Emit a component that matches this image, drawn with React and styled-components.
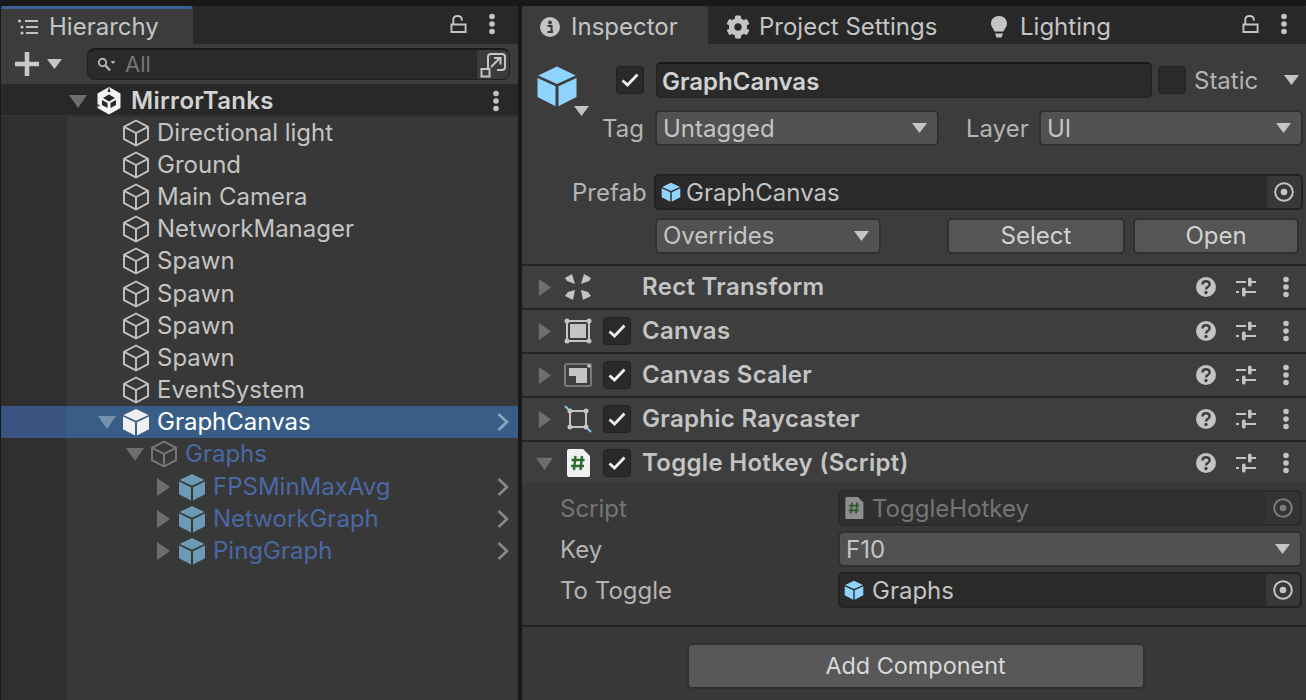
import React from "react";
import styled, {createGlobalStyle} from "styled-components";
import {FaCog} from "react-icons/fa";

const Global = createGlobalStyle`
  html, body {
    margin: 0;
    padding: 0;
    height: 700px;
    overflow: hidden;
    background: #191919;
    font-family: Inter, "Liberation Sans", sans-serif;
    color: #c4c4c4;
  }
  * { box-sizing: border-box; }
  svg { display: block; flex-shrink: 0; }
`;

const Page = styled.div`
  display: flex;
  width: 1306px;
  height: 700px;
  padding-top: 6px;
  background: #191919;
  font-size: 24px;
  line-height: 32px;
`;

const Panel = styled.section`
  display: flex;
  flex-direction: column;
  width: ${(p) => p.$width}px;
  margin-left: ${(p) => p.$left}px;
  background: #383838;
  overflow: hidden;
`;

const TabBar = styled.div`
  display: flex;
  align-items: stretch;
  height: 38px;
  background: #282828;
  border-radius: 3px 3px 0 0;
  flex-shrink: 0;
`;

const Tab = styled.div`
  display: flex;
  align-items: center;
  gap: ${(p) => p.$gap || 10}px;
  width: ${(p) => p.$width}px;
  padding-left: ${(p) => p.$pad}px;
  background: ${(p) => (p.$active ? "#3c3c3c" : "transparent")};
  border-top: 3px solid ${(p) => (p.$accent ? "#3a6398" : "transparent")};
  border-radius: 3px 3px 0 0;
`;

const TabTools = styled.div`
  display: flex;
  align-items: center;
  gap: 21px;
  margin-left: auto;
  padding-right: ${(p) => p.$right}px;
  padding-bottom: 3px;
`;

const Toolbar = styled.div`
  display: flex;
  align-items: center;
  height: 40px;
  padding: 0 8px 0 14px;
  background: #3c3c3c;
  flex-shrink: 0;
`;

const PlusMenu = styled.div`
  display: flex;
  align-items: center;
  gap: 8px;
  width: 72px;
`;

const Search = styled.div`
  display: flex;
  align-items: center;
  flex: 1;
  height: 32px;
  background: #2a2a2a;
  border: 1px solid #212121;
  border-top: 2px solid #191919;
  border-radius: 8px;
  overflow: hidden;
`;

const SearchHint = styled.span`
  flex: 1;
  margin-left: 9px;
  padding-bottom: 2px;
  color: #757575;
  font-size: 22px;
`;

const SearchIcon = styled.span`
  margin-left: 9px;
`;

const SearchButton = styled.span`
  display: flex;
  align-items: center;
  justify-content: center;
  width: 34px;
  height: 100%;
  background: #3c3c3c;
  border-left: 2px solid #2a2a2a;
`;

const SceneHeader = styled.div`
  display: flex;
  align-items: center;
  height: 32.5px;
  padding: 4px 18px 0 68px;
  background: #282828;
  border-bottom: 2px solid #333333;
  flex-shrink: 0;
  font-weight: 600;
  letter-spacing: 0.3px;
  color: #d2d2d2;
`;

const SceneName = styled.span`
  margin-left: 9px;
`;

const SceneLogo = styled.span`
  margin-left: 9px;
`;

const Tree = styled.div`
  flex: 1;
  background: linear-gradient(to right, #2f2f2f 65px, #383838 65px);
`;

const Row = styled.div`
  display: flex;
  align-items: center;
  height: 32.2px;
  padding-left: ${(p) => 96 + p.$depth * 28}px;
  padding-right: 8px;
  color: ${(p) => (p.$selected ? "#ffffff" : p.$dim ? "#4a68a3" : "#c4c4c4")};
  background: ${(p) =>
    p.$selected ? "linear-gradient(to right, #3a5380 65px, #385d87 65px)" : "transparent"};
`;

const ArrowSlot = styled.span`
  display: flex;
  justify-content: center;
  width: 20px;
`;

const RowIcon = styled.span`
  margin: 0 7px 0 5px;
`;

const RowEnd = styled.span`
  margin-left: auto;
`;

const HeaderSection = styled.div`
  display: flex;
  flex-direction: column;
  height: 222px;
  padding-top: 18px;
  background: #3c3c3c;
  border-bottom: 2px solid #232323;
  flex-shrink: 0;
`;

const FormRow = styled.div`
  display: flex;
  align-items: center;
  height: 36px;
  margin-top: ${(p) => p.$top || 0}px;
  padding-left: ${(p) => p.$left || 0}px;
`;

const Label = styled.span`
  color: #b4b4b4;
  padding-top: 1px;
  margin-left: ${(p) => p.$left || 0}px;
  width: ${(p) => (p.$width ? `${p.$width}px` : "auto")};
`;

const BigCube = styled.div`
  position: relative;
  margin-left: 14px;
  margin-top: 12px;
  width: 80px;
`;

const Caret = styled.span`
  position: absolute;
  left: 38px;
  top: 41px;
`;

const StaticCaret = styled.span`
  margin-left: 26px;
`;

const Check = styled.span`
  display: flex;
  align-items: center;
  justify-content: center;
  width: 28px;
  height: 28px;
  background: #2a2a2a;
  border: 1px solid #212121;
  border-radius: 4px;
  flex-shrink: 0;
  margin-left: ${(p) => p.$left || 0}px;
`;

const NameField = styled.div`
  display: flex;
  align-items: center;
  width: 496px;
  height: 36px;
  margin-left: 12px;
  padding: 2px 0 0 5px;
  background: #2a2a2a;
  border: 1px solid #212121;
  border-top: 2px solid #191919;
  border-radius: 5px;
  font-weight: 600;
  color: #d2d2d2;
`;

const Dropdown = styled.div`
  display: flex;
  align-items: center;
  justify-content: space-between;
  width: ${(p) => p.$width}px;
  height: 36px;
  margin-left: ${(p) => p.$left || 0}px;
  padding: 0 10px 0 6px;
  background: #515151;
  border: 2px solid #303030;
  border-radius: 5px;
  flex-shrink: 0;
`;

const DropdownText = styled.span`
  padding-top: ${(p) => p.$nudge || 0}px;
`;

const Button = styled.div`
  display: flex;
  align-items: center;
  justify-content: center;
  width: ${(p) => p.$width}px;
  height: 36px;
  margin-left: ${(p) => p.$left}px;
  background: #555555;
  border: 2px solid #303030;
  border-radius: 5px;
  color: #d2d2d2;
`;

const ObjectField = styled.div`
  display: flex;
  align-items: center;
  width: ${(p) => p.$width}px;
  height: 36px;
  margin-left: ${(p) => p.$left || 0}px;
  padding-left: ${(p) => p.$pad}px;
  background: ${(p) => (p.$dim ? "#303030" : "#2a2a2a")};
  border: 2px solid ${(p) => (p.$dim ? "#2a2a2a" : "#222222")};
  border-radius: 5px;
  overflow: hidden;
  color: ${(p) => (p.$dim ? "#757575" : "#c4c4c4")};
  flex-shrink: 0;
`;

const FieldIcon = styled.span`
  margin-right: ${(p) => p.$gap}px;
`;

const FieldText = styled.span`
  padding-top: 2px;
`;

const Picker = styled.span`
  display: flex;
  align-items: center;
  justify-content: center;
  width: 34px;
  height: 100%;
  margin-left: auto;
  background: ${(p) => (p.$dim ? "#343434" : "#383838")};
`;

const Component = styled.div`
  display: flex;
  align-items: center;
  height: ${(p) => (p.$open ? 40 : 44)}px;
  padding-right: 16px;
  padding-top: ${(p) => (p.$open ? 2 : 0)}px;
  background: #3e3e3e;
  border-bottom: ${(p) => (p.$open ? "none" : "2px solid #232323")};
  flex-shrink: 0;
  font-weight: 600;
  letter-spacing: 0.3px;
  color: #c4c4c4;
`;

const CompArrow = styled.span`
  display: flex;
  justify-content: center;
  width: 22px;
  margin-left: 11px;
`;

const CompIcon = styled.span`
  display: flex;
  justify-content: center;
  width: 30px;
  margin-left: 8px;
`;

const CompSlot = styled.span`
  width: 28px;
  margin-left: 10px;
`;

const CompTitle = styled.span`
  margin-left: 11px;
`;

const CompTools = styled.span`
  display: flex;
  align-items: center;
  margin-left: auto;
  gap: 20px;
`;

const CompDots = styled.span`
  margin-left: 6px;
`;

const Fields = styled.div`
  display: flex;
  flex-direction: column;
  gap: 5px;
  height: 145px;
  padding: 8px 4px 0 38px;
  border-bottom: 2px solid #232323;
  flex-shrink: 0;
`;

const FieldRow = styled.div`
  display: flex;
  align-items: center;
  height: 36px;
`;

const FieldLabel = styled.span`
  width: 278px;
  padding-top: 2px;
  color: ${(p) => (p.$dim ? "#757575" : "#b4b4b4")};
`;

const Footer = styled.div`
  display: flex;
  justify-content: center;
  padding: 16px 0 0 3px;
`;

const AddButton = styled.div`
  display: flex;
  align-items: center;
  justify-content: center;
  width: 458px;
  height: 46px;
  background: #585858;
  border: 2px solid #303030;
  border-radius: 5px;
  font-size: 23.4px;
  color: #d8d8d8;
`;

const Tri = ({dir = "down", color = "#6e6e6e", size = 18}) => (
  <svg width={size} height={size} viewBox="0 0 18 18">
    <polygon
      points={dir === "down" ? "0,3 18,3 9,16" : "3,0 16,9 3,18"}
      fill={color}
    />
  </svg>
);

const MiniTri = ({color = "#c4c4c4", w = 15, h = 10}) => (
  <svg width={w} height={h} viewBox="0 0 15 10">
    <polygon points="0,0 15,0 7.5,10" fill={color}/>
  </svg>
);

const Chevron = ({color = "#8a8a8a"}) => (
  <svg width="14" height="20" viewBox="0 0 14 20">
    <path d="M2.5 2 L11 10 L2.5 18" fill="none" stroke={color} strokeWidth="2.6"/>
  </svg>
);

const CubeLine = ({color = "#c4c4c4", size = 28}) => (
  <svg width={size} height={size} viewBox="0 0 28 28">
    <path
      d="M14 1.5 L26 7.8 V20.2 L14 26.5 L2 20.2 V7.8 Z M2 7.8 L14 14 L26 7.8 M14 14 V26.5"
      fill="none"
      stroke={color}
      strokeWidth="1.9"
      strokeLinejoin="round"
    />
  </svg>
);

const CubeFill = ({color = "#8fd3ff", size = 28}) => (
  <svg width={size} height={size} viewBox="0 0 28 28">
    <polygon points="14,1 26.5,7 14,12.7 1.5,7" fill={color}/>
    <polygon points="1,8.6 13,14.2 13,27.5 1,21.3" fill={color}/>
    <polygon points="27,8.6 15,14.2 15,27.5 27,21.3" fill={color}/>
  </svg>
);

const UnityLogo = () => (
  <svg width="26" height="28" viewBox="0 0 26 28">
    <polygon points="13,0 24.5,6.5 24.5,21 13,27.5 1.5,21 1.5,6.5" fill="#f2f2f2"/>
    <polygon points="13,7.5 19,11 13,14.5 7,11" fill="#282828"/>
    <polygon points="6,13 11.5,16 11.5,21 6,18" fill="#282828"/>
    <polygon points="20,13 14.5,16 14.5,21 20,18" fill="#282828"/>
    <polygon points="13,0 14.5,5 11.5,5" fill="#282828"/>
    <polygon points="1.5,17 4,18.5 1.5,20" fill="#282828"/>
  </svg>
);

const Lock = () => (
  <svg width="17" height="20" viewBox="0 0 18 20">
    <path d="M1.5 10.5 H16.5 V18.5 H1.5 Z M3.5 10 V5.5 Q3.5 1.5 8 1.5 Q12.5 1.5 12.5 5.5 V6.5"
      fill="none" stroke="#c4c4c4" strokeWidth="2"/>
  </svg>
);

const Dots = ({color = "#c4c4c4"}) => (
  <svg width="8" height="22" viewBox="0 0 8 22">
    <circle cx="4" cy="3.5" r="2.8" fill={color}/>
    <circle cx="4" cy="11" r="2.8" fill={color}/>
    <circle cx="4" cy="18.5" r="2.8" fill={color}/>
  </svg>
);

const ListIcon = () => (
  <svg width="22" height="18" viewBox="0 0 22 18">
    <circle cx="2.5" cy="3" r="1.6" fill="#c4c4c4"/>
    <circle cx="5" cy="9" r="1.6" fill="#c4c4c4"/>
    <circle cx="5" cy="15" r="1.6" fill="#c4c4c4"/>
    <path d="M8 3 H21 M9 9 H21 M9 15 H21" stroke="#c4c4c4" strokeWidth="2"/>
  </svg>
);

const Plus = () => (
  <svg width="24" height="24" viewBox="0 0 24 24">
    <path d="M12 0 V24 M0 12 H24" stroke="#c8c8c8" strokeWidth="4.6"/>
  </svg>
);

const SearchGlass = () => (
  <svg width="19" height="16" viewBox="0 0 19 16">
    <circle cx="5.5" cy="5.5" r="3.7" fill="none" stroke="#b4b4b4" strokeWidth="2"/>
    <path d="M8.5 8.5 L13 13.5" stroke="#b4b4b4" strokeWidth="2.4"/>
    <polygon points="13.5,4 18.5,4 16,7" fill="#b4b4b4"/>
  </svg>
);

const SearchWindow = () => (
  <svg width="26" height="26" viewBox="0 0 26 26">
    <path d="M8 17 V5 Q8 2 11 2 H22 Q25 2 25 5 V15 Q25 18 22 18 H17" fill="none" stroke="#c4c4c4" strokeWidth="2"/>
    <rect x="1.5" y="17" width="8" height="7.5" fill="none" stroke="#c4c4c4" strokeWidth="2"/>
    <path d="M11 15 L20 6 M14 6 H20.5 V12.5" fill="none" stroke="#c4c4c4" strokeWidth="2"/>
  </svg>
);

const Info = () => (
  <svg width="20" height="20" viewBox="0 0 20 20">
    <circle cx="10" cy="10" r="10" fill="#c4c4c4"/>
    <circle cx="10" cy="5.5" r="1.9" fill="#3c3c3c"/>
    <path d="M7.5 9 H11.5 V14.5 H13 M7.5 15 H13" fill="none" stroke="#3c3c3c" strokeWidth="2.2"/>
  </svg>
);

const Bulb = () => (
  <svg width="18" height="24" viewBox="0 0 18 24">
    <path d="M9 1 C14 1 17 4.5 17 8.5 C17 12 14.5 13.5 13.5 16.5 H4.5 C3.5 13.5 1 12 1 8.5 C1 4.5 4 1 9 1 Z" fill="#c4c4c4"/>
    <path d="M5 18.5 H13 L11.5 22.5 H6.5 Z" fill="#c4c4c4"/>
  </svg>
);

const CheckMark = () => (
  <svg width="18" height="14" viewBox="0 0 18 14">
    <path d="M1.5 7.5 L6.5 12 L16.5 1.5" fill="none" stroke="#f0f0f0" strokeWidth="2.8"/>
  </svg>
);

const Target = ({color = "#c4c4c4"}) => (
  <svg width="20" height="20" viewBox="0 0 20 20">
    <circle cx="10" cy="10" r="8.8" fill="none" stroke={color} strokeWidth="2"/>
    <circle cx="10" cy="10" r="3.3" fill={color}/>
  </svg>
);

const Help = () => (
  <svg width="20" height="20" viewBox="0 0 20 20">
    <circle cx="10" cy="10" r="10" fill="#c4c4c4"/>
    <path d="M6.5 7.5 Q6.5 4.3 10 4.3 Q13.6 4.3 13.6 7.2 Q13.6 9 11.8 9.8 Q10 10.6 10 12.5" fill="none" stroke="#3e3e3e" strokeWidth="2.4"/>
    <circle cx="10" cy="15.5" r="1.7" fill="#3e3e3e"/>
  </svg>
);

const Sliders = () => (
  <svg width="20" height="20" viewBox="0 0 20 20">
    <path d="M0 5 H10 M14 5 H20 M0 15 H3 M8 15 H20" stroke="#c4c4c4" strokeWidth="2"/>
    <rect x="12" y="0.5" width="3.6" height="9" rx="1.6" fill="#c4c4c4"/>
    <rect x="6" y="10.5" width="3.6" height="9" rx="1.6" fill="#c4c4c4"/>
  </svg>
);

const RectIcon = () => (
  <svg width="26" height="26" viewBox="0 0 26 26">
    <g fill="#c4c4c4">
      <polygon points="0,4 7,0 10,10 2,7"/>
      <polygon points="26,4 19,0 16,10 24,7"/>
      <polygon points="0,22 8,26 10,16 3,18"/>
      <polygon points="26,22 18,26 16,16 23,18"/>
    </g>
  </svg>
);

const CanvasIcon = () => (
  <svg width="28" height="26" viewBox="0 0 28 26">
    <rect x="3" y="3" width="22" height="20" fill="none" stroke="#c4c4c4" strokeWidth="2"/>
    <rect x="6" y="6" width="16" height="14" fill="#c4c4c4"/>
    <g fill="#c4c4c4">
      <circle cx="3" cy="3" r="2.5"/><circle cx="25" cy="3" r="2.5"/>
      <circle cx="3" cy="23" r="2.5"/><circle cx="25" cy="23" r="2.5"/>
    </g>
  </svg>
);

const ScalerIcon = () => (
  <svg width="28" height="24" viewBox="0 0 28 24">
    <rect x="1" y="1" width="26" height="22" rx="1.5" fill="none" stroke="#8a8a8a" strokeWidth="1.6"/>
    <polygon points="5,5 23,5 23,20 12,20 12,13 5,13" fill="#c4c4c4"/>
    <circle cx="25" cy="3" r="1.8" fill="#c4c4c4"/>
  </svg>
);

const RaycastIcon = () => (
  <svg width="28" height="28" viewBox="0 0 28 28">
    <path d="M1 1 L5 5 M23 23 L27 27" stroke="#7cc8f5" strokeWidth="2"/>
    <rect x="6" y="6" width="16" height="16" fill="none" stroke="#c4c4c4" strokeWidth="2"/>
    <g fill="#c4c4c4">
      <circle cx="6" cy="6" r="2.5"/><circle cx="22" cy="6" r="2.5"/>
      <circle cx="6" cy="22" r="2.5"/><circle cx="22" cy="22" r="2.5"/>
    </g>
  </svg>
);

const ScriptIcon = ({w = 24, h = 28, dim}) => (
  <svg width={w} height={h} viewBox="0 0 24 28">
    <path d="M1 2 Q1 0 3 0 H17 L24 7 V26 Q24 28 22 28 H3 Q1 28 1 26 Z" fill={dim ? "#8e8e8e" : "#f0f0f0"}/>
    <path d="M9.5 7 L8 21 M16 7 L14.5 21 M5.5 11 H18.5 M5 17 H18"
      fill="none" stroke={dim ? "#2f5a2f" : "#2d6a2d"} strokeWidth="2.4"/>
  </svg>
);

const sceneItems = [
  {name: "Directional light", depth: 0},
  {name: "Ground", depth: 0},
  {name: "Main Camera", depth: 0},
  {name: "NetworkManager", depth: 0},
  {name: "Spawn", depth: 0},
  {name: "Spawn", depth: 0},
  {name: "Spawn", depth: 0},
  {name: "Spawn", depth: 0},
  {name: "EventSystem", depth: 0},
  {name: "GraphCanvas", depth: 0, selected: true, arrow: "down", end: true},
  {name: "Graphs", depth: 1, dim: true, arrow: "down"},
  {name: "FPSMinMaxAvg", depth: 2, dim: true, arrow: "right", prefab: true, end: true},
  {name: "NetworkGraph", depth: 2, dim: true, arrow: "right", prefab: true, end: true},
  {name: "PingGraph", depth: 2, dim: true, arrow: "right", prefab: true, end: true},
];

const components = [
  {title: "Rect Transform", icon: <RectIcon/>},
  {title: "Canvas", icon: <CanvasIcon/>, check: true},
  {title: "Canvas Scaler", icon: <ScalerIcon/>, check: true},
  {title: "Graphic Raycaster", icon: <RaycastIcon/>, check: true},
  {title: "Toggle Hotkey (Script)", icon: <ScriptIcon/>, check: true, open: true},
];

const itemIcon = (item) => {
  if (item.selected) return <CubeFill color="#f0f0f0"/>;
  if (item.prefab) return <CubeFill color="#6a9ab5"/>;
  if (item.dim) return <CubeLine color="#7a7a7a"/>;
  return <CubeLine/>;
};

const App = () => (
  <Page>
    <Global/>
    <Panel $width={517} $left={1}>
      <TabBar>
        <Tab $active $accent $width={192} $pad={16} $gap={10}>
          <ListIcon/>
          Hierarchy
        </Tab>
        <TabTools $right={22}>
          <Lock/>
          <Dots/>
        </TabTools>
      </TabBar>
      <Toolbar>
        <PlusMenu>
          <Plus/>
          <MiniTri/>
        </PlusMenu>
        <Search>
          <SearchIcon><SearchGlass/></SearchIcon>
          <SearchHint>All</SearchHint>
          <SearchButton><SearchWindow/></SearchButton>
        </Search>
      </Toolbar>
      <SceneHeader>
        <Tri/>
        <SceneLogo><UnityLogo/></SceneLogo>
        <SceneName>MirrorTanks</SceneName>
        <RowEnd><Dots/></RowEnd>
      </SceneHeader>
      <Tree>
        {sceneItems.map((item, ind) => (
          <Row key={ind} $depth={item.depth} $selected={item.selected} $dim={item.dim}>
            <ArrowSlot>
              {item.arrow && <Tri dir={item.arrow} color={item.selected ? "#7492ad" : "#6e6e6e"}/>}
            </ArrowSlot>
            <RowIcon>{itemIcon(item)}</RowIcon>
            {item.name}
            {item.end && <RowEnd><Chevron color={item.selected ? "#8ba6c0" : "#8a8a8a"}/></RowEnd>}
          </Row>
        ))}
      </Tree>
    </Panel>

    <Panel $width={784} $left={4}>
      <TabBar>
        <Tab $active $width={186} $pad={18} $gap={11}>
          <Info/>
          Inspector
        </Tab>
        <Tab $width={256} $pad={18} $gap={9}>
          <FaCog size={24}/>
          Project Settings
        </Tab>
        <Tab $width={180} $pad={26} $gap={12}>
          <Bulb/>
          Lighting
        </Tab>
        <TabTools $right={18}>
          <Lock/>
          <Dots/>
        </TabTools>
      </TabBar>
      <HeaderSection>
        <FormRow>
          <BigCube>
            <CubeFill size={42}/>
            <Caret><MiniTri/></Caret>
          </BigCube>
          <Check><CheckMark/></Check>
          <NameField>GraphCanvas</NameField>
          <Check $left={6}/>
          <Label $left={8}>Static</Label>
          <StaticCaret><MiniTri/></StaticCaret>
        </FormRow>
        <FormRow $top={12} $left={80}>
          <Label $width={53}>Tag</Label>
          <Dropdown $width={284}><DropdownText $nudge={1}>Untagged</DropdownText><MiniTri/></Dropdown>
          <Label $left={27} $width={73}>Layer</Label>
          <Dropdown $width={264}><DropdownText $nudge={1}>UI</DropdownText><MiniTri/></Dropdown>
        </FormRow>
        <FormRow $top={28} $left={50}>
          <Label $width={82}>Prefab</Label>
          <ObjectField $width={649} $pad={5}>
            <FieldIcon $gap={5}><CubeFill size={20}/></FieldIcon>
            <FieldText>GraphCanvas</FieldText>
            <Picker><Target/></Picker>
          </ObjectField>
        </FormRow>
        <FormRow $top={8} $left={133}>
          <Dropdown $width={226}><DropdownText>Overrides</DropdownText><MiniTri/></Dropdown>
          <Button $width={178} $left={66}>Select</Button>
          <Button $width={166} $left={8}>Open</Button>
        </FormRow>
      </HeaderSection>
      {components.map((comp) => (
        <Component key={comp.title} $open={comp.open}>
          <CompArrow>
            <Tri dir={comp.open ? "down" : "right"} size={17}/>
          </CompArrow>
          <CompIcon>{comp.icon}</CompIcon>
          <CompSlot>
            {comp.check && <Check><CheckMark/></Check>}
          </CompSlot>
          <CompTitle>{comp.title}</CompTitle>
          <CompTools>
            <Help/>
            <Sliders/>
            <CompDots><Dots/></CompDots>
          </CompTools>
        </Component>
      ))}
      <Fields>
        <FieldRow>
          <FieldLabel $dim>Script</FieldLabel>
          <ObjectField $dim $width={464} $pad={4}>
            <FieldIcon $gap={8}><ScriptIcon w={20} h={22} dim/></FieldIcon>
            <FieldText>ToggleHotkey</FieldText>
            <Picker $dim><Target color="#7c7c7c"/></Picker>
          </ObjectField>
        </FieldRow>
        <FieldRow>
          <FieldLabel>Key</FieldLabel>
          <Dropdown $width={464}><DropdownText $nudge={2}>F10</DropdownText><MiniTri/></Dropdown>
        </FieldRow>
        <FieldRow>
          <FieldLabel>To Toggle</FieldLabel>
          <ObjectField $width={464} $pad={4}>
            <FieldIcon $gap={8}><CubeFill size={20}/></FieldIcon>
            <FieldText>Graphs</FieldText>
            <Picker><Target/></Picker>
          </ObjectField>
        </FieldRow>
      </Fields>
      <Footer>
        <AddButton>Add Component</AddButton>
      </Footer>
    </Panel>
  </Page>
);

export default App;
